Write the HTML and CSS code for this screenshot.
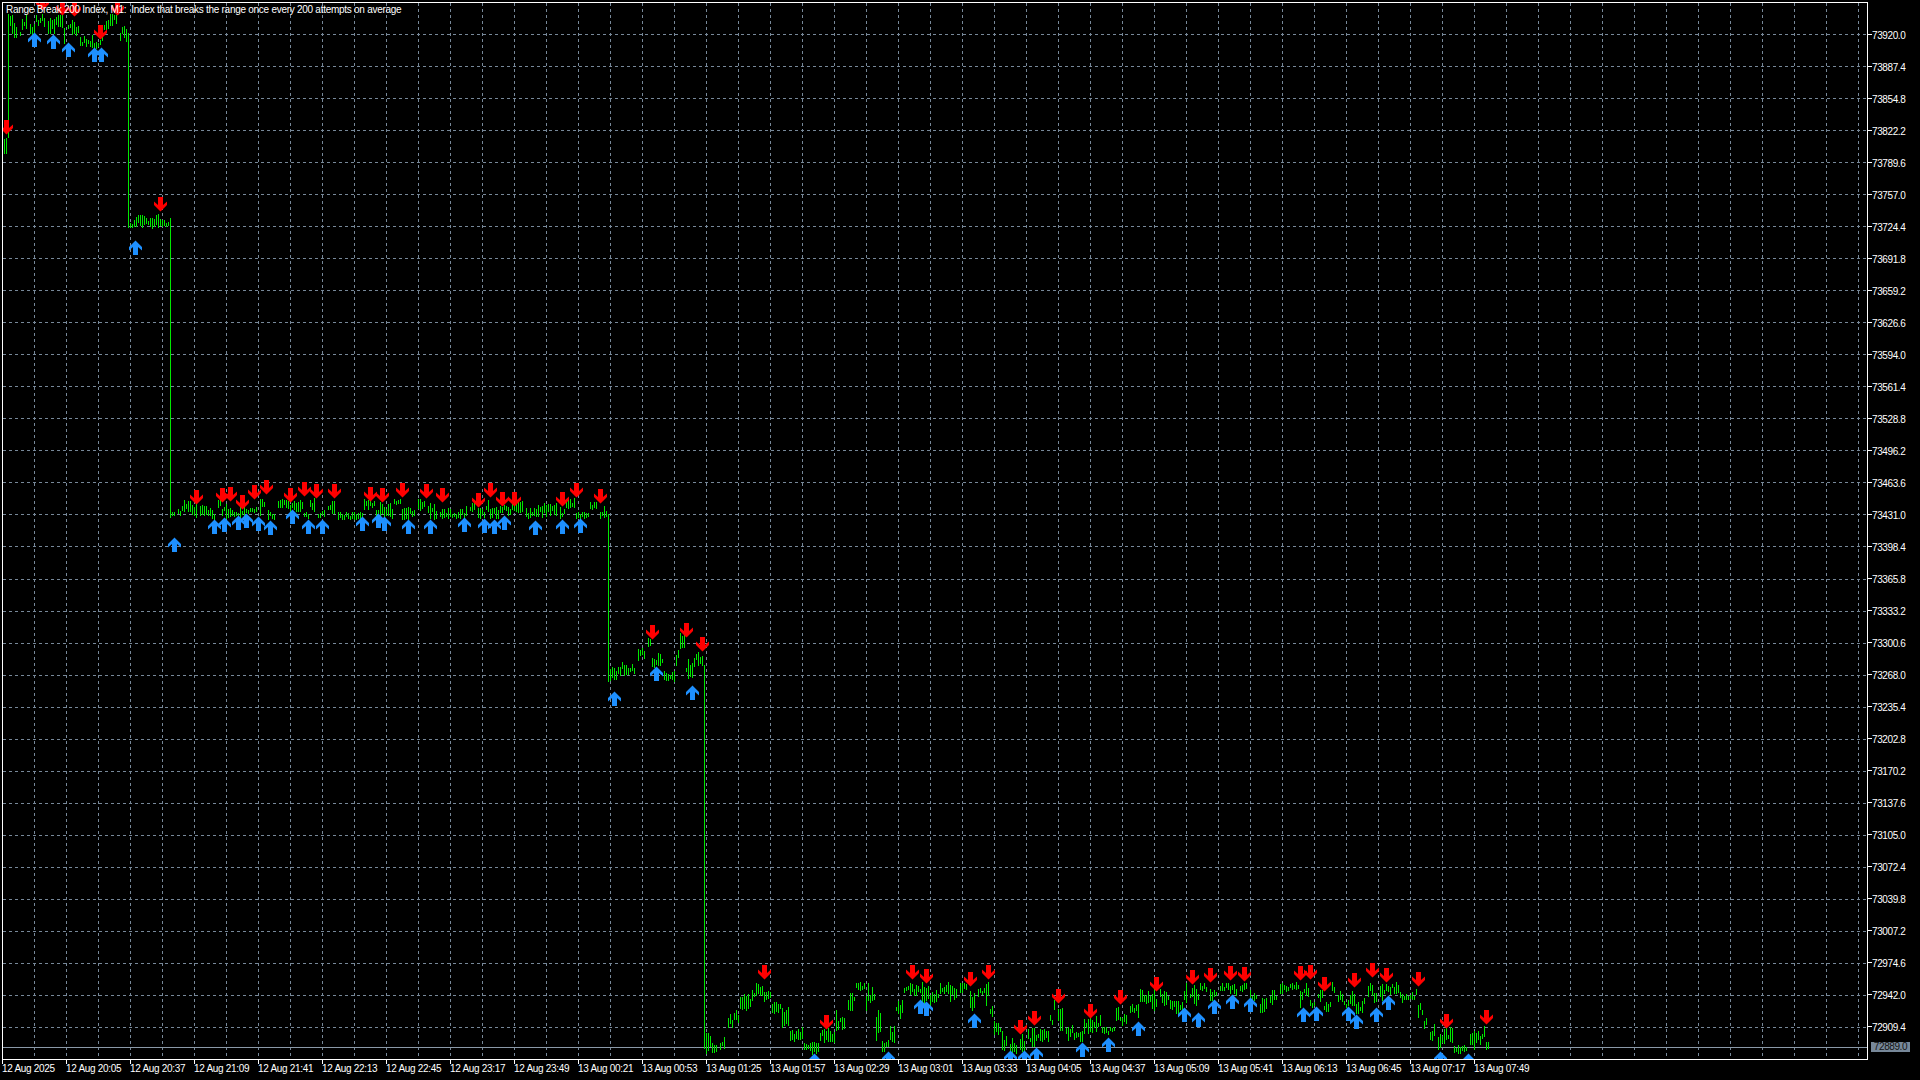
FILE: index.html
```html
<!DOCTYPE html>
<html lang="en">
<head>
    <meta charset="UTF-8">
    <meta name="viewport" content="width=device-width, initial-scale=1.0">
    <title>Range Break 200 Index, M1</title>
    <link rel="stylesheet" href="styles.css">
</head>
<body>
    <div class="terminal">
        <!-- Chart -->
        <div class="plot">
            <svg id="chart" class="chart" width="1864" height="1056" viewBox="3 3 1864 1056" shape-rendering="crispEdges"></svg>
            <div class="chart-title">Range Break 200 Index, M1:&nbsp; Index that breaks the range once every 200 attempts on average</div>
        </div>

        <!-- Price scale -->
        <div class="price-axis">
            <div class="price">73920.0</div>
            <div class="price">73887.4</div>
            <div class="price">73854.8</div>
            <div class="price">73822.2</div>
            <div class="price">73789.6</div>
            <div class="price">73757.0</div>
            <div class="price">73724.4</div>
            <div class="price">73691.8</div>
            <div class="price">73659.2</div>
            <div class="price">73626.6</div>
            <div class="price">73594.0</div>
            <div class="price">73561.4</div>
            <div class="price">73528.8</div>
            <div class="price">73496.2</div>
            <div class="price">73463.6</div>
            <div class="price">73431.0</div>
            <div class="price">73398.4</div>
            <div class="price">73365.8</div>
            <div class="price">73333.2</div>
            <div class="price">73300.6</div>
            <div class="price">73268.0</div>
            <div class="price">73235.4</div>
            <div class="price">73202.8</div>
            <div class="price">73170.2</div>
            <div class="price">73137.6</div>
            <div class="price">73105.0</div>
            <div class="price">73072.4</div>
            <div class="price">73039.8</div>
            <div class="price">73007.2</div>
            <div class="price">72974.6</div>
            <div class="price">72942.0</div>
            <div class="price">72909.4</div>
            <div class="bid-tag">72889.0</div>
        </div>

        <!-- Time scale -->
        <div class="time-axis">
            <div class="time">12 Aug 2025</div>
            <div class="time">12 Aug 20:05</div>
            <div class="time">12 Aug 20:37</div>
            <div class="time">12 Aug 21:09</div>
            <div class="time">12 Aug 21:41</div>
            <div class="time">12 Aug 22:13</div>
            <div class="time">12 Aug 22:45</div>
            <div class="time">12 Aug 23:17</div>
            <div class="time">12 Aug 23:49</div>
            <div class="time">13 Aug 00:21</div>
            <div class="time">13 Aug 00:53</div>
            <div class="time">13 Aug 01:25</div>
            <div class="time">13 Aug 01:57</div>
            <div class="time">13 Aug 02:29</div>
            <div class="time">13 Aug 03:01</div>
            <div class="time">13 Aug 03:33</div>
            <div class="time">13 Aug 04:05</div>
            <div class="time">13 Aug 04:37</div>
            <div class="time">13 Aug 05:09</div>
            <div class="time">13 Aug 05:41</div>
            <div class="time">13 Aug 06:13</div>
            <div class="time">13 Aug 06:45</div>
            <div class="time">13 Aug 07:17</div>
            <div class="time">13 Aug 07:49</div>
        </div>
    </div>

    <script src="chart.js"></script>
</body>
</html>
```

FILE: styles.css
```css
body {
    margin: 0;
    padding: 0;
    background-color: black;
    color: white;
    font-family: "Liberation Sans", Arial, sans-serif;
    font-size: 10px;
    overflow: hidden;
}

.terminal {
    display: grid;
    grid-template-columns: 1866px 1fr;
    grid-template-rows: 1058px 1fr;
    width: 1920px;
    height: 1080px;
    padding: 2px 0 0 2px;
    box-sizing: border-box;
}

.plot {
    position: relative;
    border: 1px solid white;
    box-sizing: border-box;
    overflow: hidden;
}

.chart {
    display: block;
}

.chart-title {
    position: absolute;
    top: 1px;
    left: 3px;
    line-height: 12px;
    letter-spacing: -0.27px;
    white-space: nowrap;
}

/* Price scale */
.price-axis {
    position: relative;
    display: flex;
    flex-direction: column;
    padding-top: 17px;
    letter-spacing: -0.4px;
}

.price {
    display: flex;
    align-items: center;
    height: 32.03px;
    flex: none;
}

.price::before {
    content: "";
    width: 4px;
    height: 1px;
    margin-bottom: 2px;
    background-color: white;
}

.bid-tag {
    position: absolute;
    top: 1040px;
    left: 3px;
    width: 39px;
    height: 10px;
    line-height: 10px;
    text-align: center;
    background-color: #778899;
    color: #111;
}

/* Time scale */
.time-axis {
    display: flex;
    letter-spacing: -0.3px;
}

.time {
    width: 64px;
    flex: none;
    white-space: nowrap;
    line-height: 10px;
}

.time::before {
    content: "";
    display: block;
    width: 1px;
    height: 4px;
    background-color: white;
}
```

FILE: chart.js
```js
const svg = document.getElementById('chart');
const NS = 'http://www.w3.org/2000/svg';

const GRID = '#778899';
const BARS = '#00e800';
const UP = '#1e90ff';
const DOWN = '#ff0000';

function add(tag, attrs) {
    const el = document.createElementNS(NS, tag);
    for (const k in attrs) el.setAttribute(k, attrs[k]);
    svg.appendChild(el);
    return el;
}

function vline(x, y1, y2, color) {
    add('rect', { x: x, y: y1, width: 1, height: y2 - y1 + 1, fill: color });
}

// Small repeatable random so the bars stay the same on every load
let seed = 20250812;
function rnd() {
    seed = (seed * 1664525 + 1013904223) % 4294967296;
    return seed / 4294967296;
}

// Grid
for (let k = 0; k < 32; k++) {
    const y = Math.round(34 + k * 32.03) + 0.5;
    add('line', { x1: 3, x2: 1867, y1: y, y2: y, stroke: GRID, 'stroke-dasharray': '3 3' });
}
for (let k = 1; k < 59; k++) {
    const x = 2 + k * 32 + 0.5;
    add('line', { x1: x, x2: x, y1: 3, y2: 1059, stroke: GRID, 'stroke-dasharray': '3 3' });
}

// Bid line
add('rect', { x: 3, y: 1047, width: 1864, height: 1, fill: '#8a99a8' });

// Price bars: [x1, x2, top, bottom] read off 3x crops, placed at crop origin (ox, oy)
function bars(ox, oy, segments) {
    segments.forEach(s => {
        const from = Math.ceil((ox + s[0] / 3) / 2) * 2;
        const to = ox + s[1] / 3;
        const top = oy + s[2] / 3;
        const bottom = oy + s[3] / 3;
        for (let x = from; x <= to; x += 2) {
            const h = bottom - top;
            const y1 = Math.round(top + Math.pow(rnd(), 1.5) * h * 0.55);
            const y2 = Math.round(bottom - Math.pow(rnd(), 1.5) * h * 0.55);
            vline(x, y1, Math.max(y1 + 3, y2), BARS);
        }
    });
}

bars(0, 0, [
    [12, 20, 408, 460], [30, 36, 42, 100], [37, 50, 70, 115], [55, 64, 80, 115], [66, 82, 45, 90],
    [85, 102, 70, 105], [105, 137, 42, 80], [140, 162, 55, 100], [165, 187, 42, 80], [190, 197, 75, 130],
    [200, 237, 60, 105], [240, 277, 105, 145], [280, 302, 115, 145], [305, 310, 85, 125], [312, 327, 60, 90],
    [330, 352, 42, 75], [355, 384, 75, 125],
    [388, 402, 660, 683], [405, 422, 645, 683], [425, 457, 645, 683], [460, 482, 640, 680], [485, 510, 655, 683]
]);

bars(160, 470, [
    [32, 47, 125, 145], [50, 62, 110, 140], [65, 87, 90, 125], [90, 112, 92, 145], [115, 152, 105, 135],
    [155, 167, 120, 148], [170, 182, 85, 125], [185, 207, 95, 145], [210, 242, 110, 145], [245, 272, 100, 140],
    [275, 292, 105, 130], [295, 317, 85, 135], [320, 347, 115, 148], [350, 387, 85, 115], [390, 427, 90, 125],
    [430, 447, 120, 148], [450, 467, 85, 125], [470, 497, 120, 145], [500, 527, 92, 130], [530, 607, 125, 148],
    [610, 642, 85, 120], [645, 662, 95, 148], [665, 697, 100, 145], [700, 722, 85, 100], [725, 767, 110, 148],
    [770, 797, 85, 120], [800, 832, 100, 148]
]);

bars(440, 470, [
    [0, 72, 115, 145], [73, 82, 85, 135], [85, 107, 97, 125], [110, 132, 110, 145], [135, 147, 88, 125],
    [150, 177, 110, 145], [180, 212, 100, 135], [215, 247, 88, 125], [255, 282, 115, 145], [285, 307, 105, 140],
    [310, 352, 100, 140], [355, 372, 110, 145], [375, 402, 85, 115], [405, 447, 125, 145], [450, 472, 95, 125],
    [475, 503, 105, 145]
]);

bars(590, 610, [
    [58, 87, 170, 212], [90, 137, 155, 195], [140, 167, 110, 150], [170, 181, 80, 110], [182, 217, 130, 170],
    [220, 252, 180, 212], [255, 267, 110, 170], [270, 287, 70, 120], [288, 307, 140, 212], [312, 341, 125, 170]
]);

bars(690, 950, [
    [50, 62, 250, 300], [65, 82, 275, 310], [85, 107, 262, 297], [110, 127, 190, 240], [130, 147, 180, 225],
    [150, 182, 130, 180], [185, 195, 110, 150], [197, 217, 97, 135], [220, 242, 115, 155], [245, 272, 155, 195],
    [275, 297, 165, 235], [300, 332, 235, 275], [335, 338, 225, 265], [340, 387, 275, 312], [390, 432, 235, 280],
    [435, 467, 180, 240], [470, 492, 120, 180], [495, 522, 97, 120], [525, 552, 100, 180], [555, 572, 180, 270],
    [575, 597, 270, 305], [600, 612, 225, 280], [615, 637, 150, 205], [640, 657, 100, 130], [660, 692, 97, 140],
    [695, 722, 97, 180], [725, 747, 120, 160], [750, 777, 97, 130], [780, 802, 105, 155], [805, 832, 97, 130],
    [835, 857, 110, 180], [860, 882, 110, 140], [885, 897, 97, 170]
]);

bars(990, 950, [
    [0, 7, 160, 200], [10, 32, 210, 255], [35, 52, 240, 300], [55, 82, 260, 310], [85, 107, 250, 310],
    [110, 132, 232, 290], [135, 152, 235, 275], [155, 177, 235, 275], [180, 187, 180, 235], [190, 197, 145, 180],
    [200, 217, 175, 240], [225, 247, 210, 270], [250, 277, 230, 275], [280, 302, 200, 250], [305, 332, 195, 245],
    [335, 357, 230, 260], [360, 372, 230, 240], [375, 387, 165, 215], [390, 412, 190, 225], [415, 447, 160, 205],
    [450, 482, 115, 160], [485, 502, 115, 180], [505, 537, 110, 165], [540, 577, 150, 190], [580, 592, 97, 170],
    [595, 612, 100, 165], [615, 627, 110, 185], [630, 652, 97, 125], [655, 667, 110, 155], [670, 682, 110, 140],
    [685, 717, 97, 125], [720, 742, 97, 135], [745, 772, 97, 125], [775, 802, 120, 155], [805, 832, 145, 190],
    [835, 862, 120, 165], [865, 897, 100, 130]
]);

bars(1290, 950, [
    [0, 27, 97, 118], [30, 37, 115, 170], [40, 57, 97, 140], [60, 77, 135, 180], [80, 97, 115, 155],
    [100, 122, 145, 190], [125, 137, 97, 130], [140, 157, 120, 155], [160, 177, 145, 180], [180, 192, 120, 170],
    [195, 217, 150, 190], [220, 227, 140, 170], [232, 247, 97, 140], [250, 262, 110, 160], [265, 282, 97, 150],
    [285, 302, 100, 135], [305, 327, 97, 130], [330, 357, 125, 155], [360, 377, 125, 150], [378, 382, 97, 135],
    [383, 397, 150, 205], [400, 412, 205, 235], [415, 437, 220, 270], [440, 452, 245, 300], [455, 487, 230, 290],
    [490, 532, 285, 310], [535, 552, 240, 300], [555, 577, 240, 285], [580, 582, 215, 270], [585, 597, 265, 300]
]);

// Drops between ranges
vline(8, 14, 137, BARS);
vline(128, 37, 227, BARS);
vline(170, 225, 517, BARS);
vline(608, 514, 681, BARS);
vline(704, 665, 1048, BARS);
vline(706, 1033, 1053, BARS);

// Arrows: x is the centre, y the tip
const ARROW = '0,-0.5 6.5,6 6.5,9.5 2.5,6 2.5,14 -2.5,14 -2.5,6 -6.5,9.5 -6.5,6';

function arrow(x, y, fill, flip) {
    add('polygon', {
        points: ARROW,
        fill: fill,
        'shape-rendering': 'geometricPrecision',
        transform: 'translate(' + (x + 0.5) + ' ' + y + ')' + (flip ? ' scale(1 -1)' : '')
    });
}

const upArrows = [
    [34, 33], [53, 35], [68, 43], [94, 48], [101, 48], [135, 241],
    [174, 538], [214, 520], [224, 518], [238, 516], [246, 514], [258, 517], [270, 521], [292, 510],
    [308, 520], [322, 520], [362, 517], [378, 514], [384, 517], [408, 520], [430, 520],
    [464, 518], [484, 519], [494, 520], [504, 516], [535, 521], [562, 520], [580, 519],
    [614, 692], [656, 667], [692, 686],
    [814, 1054], [888, 1052], [920, 1000], [926, 1002], [974, 1014],
    [1010, 1051], [1024, 1051], [1036, 1048], [1082, 1043], [1108, 1038], [1138, 1022], [1184, 1008],
    [1198, 1013], [1214, 1000], [1232, 995], [1250, 998],
    [1303, 1008], [1316, 1007], [1348, 1007], [1356, 1015], [1376, 1008], [1388, 996], [1440, 1052], [1468, 1054]
];

const downArrows = [
    [42, 10], [62, 15], [74, 16], [117, 15], [100, 39], [6, 134], [160, 211],
    [196, 504], [222, 502], [230, 501], [242, 509], [254, 499], [266, 494], [290, 502], [304, 496],
    [316, 498], [334, 498], [370, 501], [382, 502], [402, 497], [426, 498], [442, 502],
    [478, 507], [490, 497], [502, 506], [514, 506], [562, 506], [576, 497], [600, 503],
    [652, 639], [686, 637], [702, 651],
    [764, 979], [826, 1029], [912, 979], [926, 983], [970, 986], [988, 979],
    [1020, 1034], [1034, 1025], [1058, 1003], [1090, 1018], [1120, 1004], [1156, 991], [1192, 984],
    [1210, 982], [1230, 980], [1244, 981],
    [1300, 980], [1310, 979], [1324, 991], [1354, 987], [1372, 977], [1386, 982], [1418, 986],
    [1446, 1028], [1486, 1024]
];

upArrows.forEach(a => arrow(a[0], a[1], UP, false));
downArrows.forEach(a => arrow(a[0], a[1], DOWN, true));
```
